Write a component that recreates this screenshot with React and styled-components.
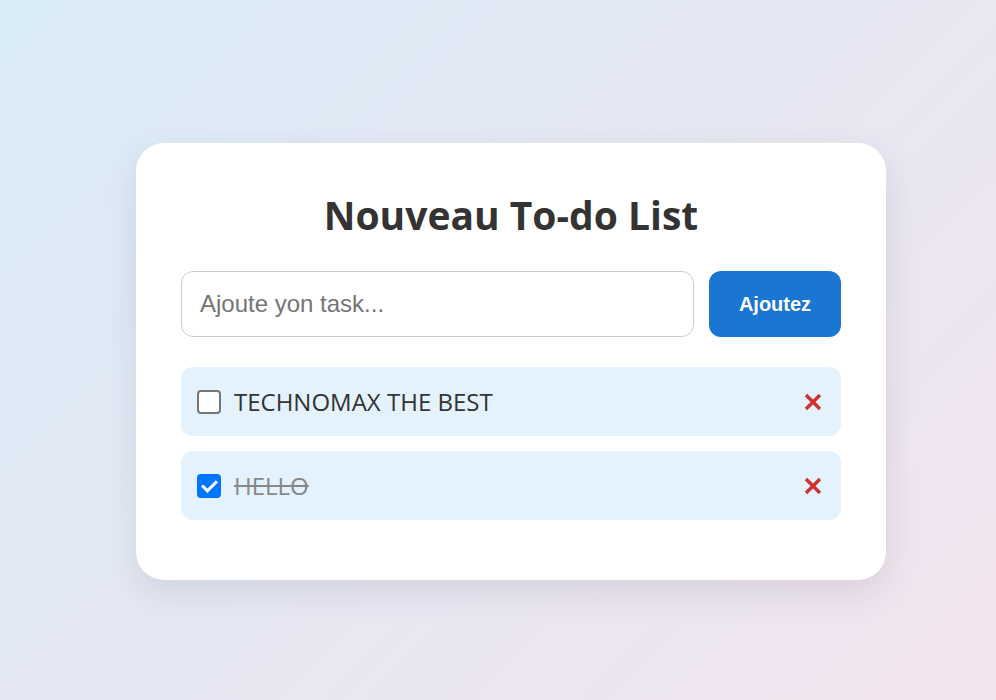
import styled, { createGlobalStyle } from "styled-components";

const GlobalStyle = createGlobalStyle`
  * { box-sizing: border-box; }
  html, body {
    margin: 0;
    min-height: 100%;
  }
  body {
    min-height: 700px;
    background: linear-gradient(135deg, #d9ecf8 0%, #e6e8f3 50%, #f3e4ee 100%);
    font-family: "Open Sans", "Liberation Sans", sans-serif;
  }
`;

export default function App() {
  const tasks = [
    { id: 1, text: "TECHNOMAX THE BEST", done: false },
    { id: 2, text: "HELLO", done: true },
  ];

  return (
    <Page>
      <GlobalStyle />
      <Card>
        <Title>Nouveau To-do List</Title>
        <InputRow>
          <TaskInput type="text" placeholder="Ajoute yon task..." />
          <AddButton>Ajoutez</AddButton>
        </InputRow>
        <TaskList>
          {tasks.map((task) => (
            <TaskItem key={task.id}>
              <Check type="checkbox" defaultChecked={task.done} />
              <TaskText $done={task.done}>{task.text}</TaskText>
              <DeleteButton aria-label="Efase">
                <svg width="20" height="20" viewBox="0 0 20 20">
                  <path
                    d="M3 3 L17 17 M17 3 L3 17"
                    stroke="#d32f2f"
                    strokeWidth="3.4"
                    strokeLinecap="butt"
                  />
                </svg>
              </DeleteButton>
            </TaskItem>
          ))}
        </TaskList>
      </Card>
    </Page>
  );
}

const Page = styled.div`
  padding: 143px 0 0 136px;
`;

const Card = styled.div`
  width: 750px;
  height: 437px;
  background: #fff;
  border-radius: 28px;
  padding: 45px;
  box-shadow: 0 12px 34px rgba(60, 60, 90, 0.12);
`;

const Title = styled.h1`
  margin: 0 0 29px;
  font-size: 39px;
  line-height: 54px;
  font-weight: 700;
  color: #333;
  text-align: center;
`;

const InputRow = styled.div`
  display: flex;
  gap: 15px;
`;

const TaskInput = styled.input`
  flex: 1;
  height: 66px;
  padding: 0 18px;
  border: 1px solid #ccc;
  border-radius: 12px;
  font-family: "Liberation Sans", Arial, sans-serif;
  font-size: 24px;
  color: #333;
  outline: none;
  &::placeholder {
    color: #757575;
  }
`;

const AddButton = styled.button`
  width: 132px;
  height: 66px;
  border: none;
  border-radius: 12px;
  background: #1976d2;
  color: #fff;
  font-family: "Liberation Sans", Arial, sans-serif;
  font-size: 20px;
  font-weight: 700;
`;

const TaskList = styled.ul`
  list-style: none;
  margin: 30px 0 0;
  padding: 0;
  display: flex;
  flex-direction: column;
  gap: 15px;
`;

const TaskItem = styled.li`
  display: flex;
  align-items: center;
  height: 69px;
  padding: 0 18px 0 16px;
  background: #e3f2fd;
  border-radius: 12px;
`;

const Check = styled.input`
  appearance: none;
  position: relative;
  width: 24px;
  height: 24px;
  margin: 0 13px 0 0;
  border: 2px solid #767676;
  border-radius: 4px;
  background: #fff;
  &:checked {
    border-color: #0075ff;
    background: #0075ff;
  }
  &:checked::after {
    content: "";
    position: absolute;
    left: 6px;
    top: 1px;
    width: 6px;
    height: 12px;
    border: solid #fff;
    border-width: 0 3px 3px 0;
    transform: rotate(45deg);
  }
`;

const TaskText = styled.span`
  flex: 1;
  font-size: 24px;
  color: ${(props) => (props.$done ? "#888" : "#333")};
  text-decoration: ${(props) => (props.$done ? "line-through" : "none")};
`;

const DeleteButton = styled.button`
  display: flex;
  padding: 0;
  border: none;
  background: none;
`;
